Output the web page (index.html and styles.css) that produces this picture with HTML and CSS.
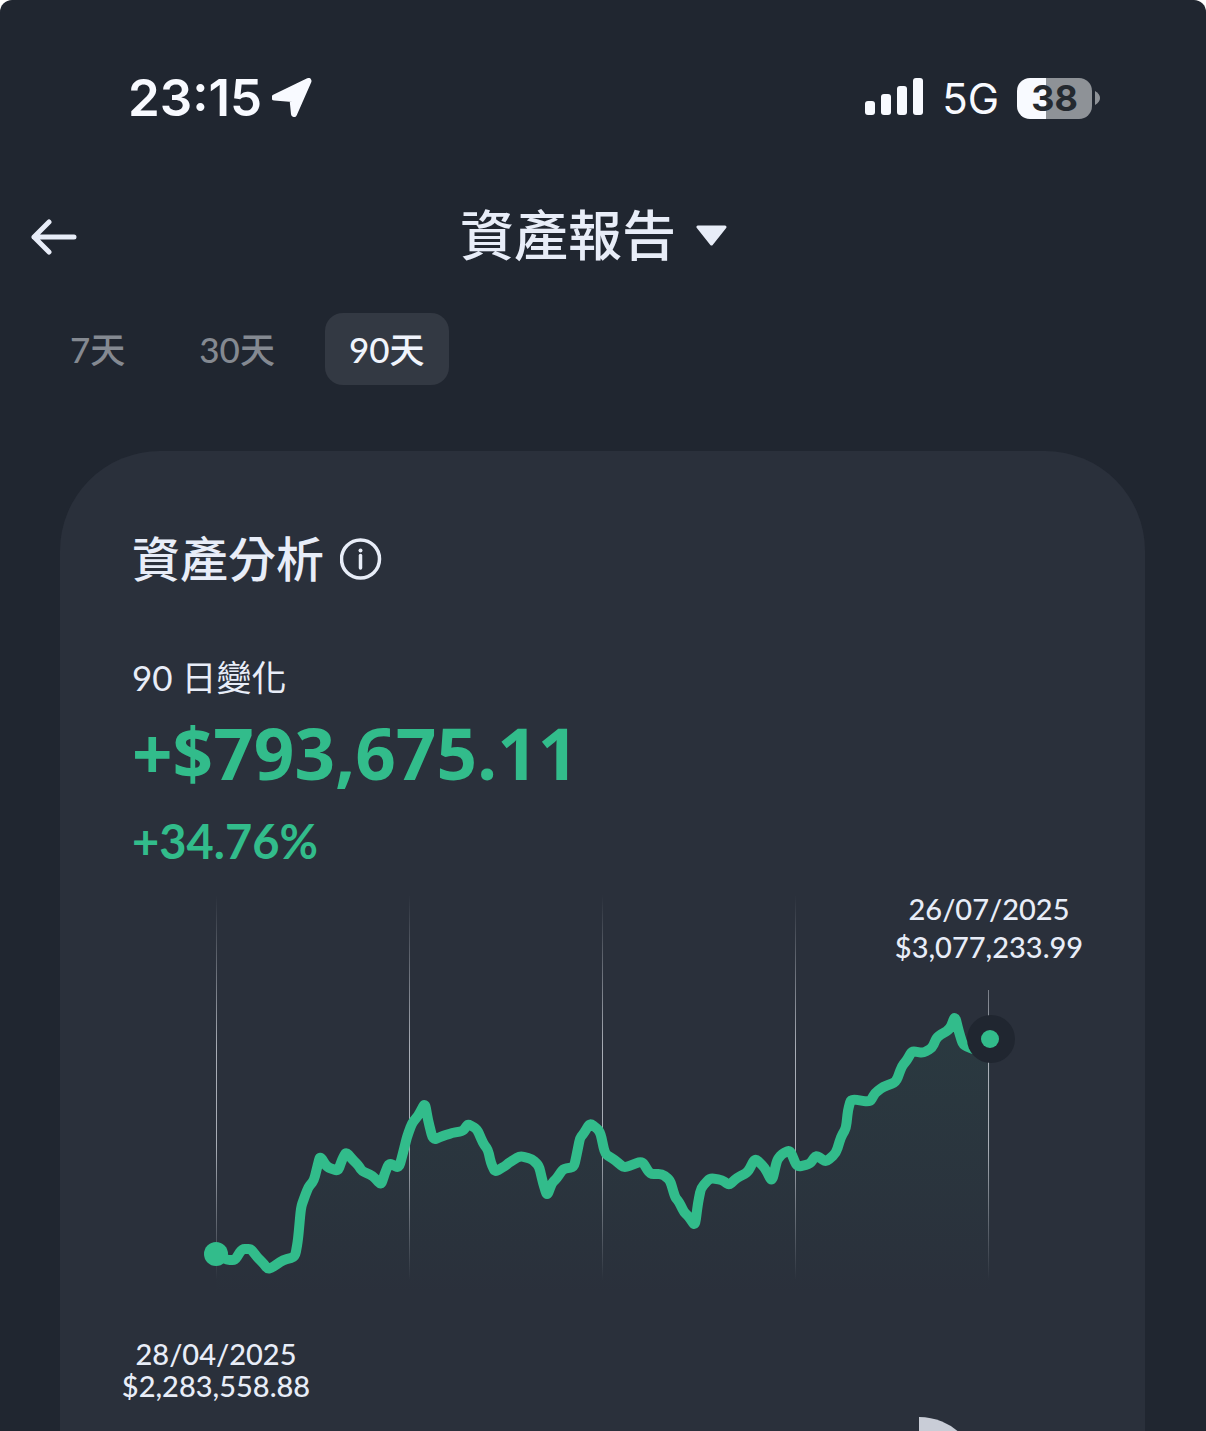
FILE: index.html
```html
<!DOCTYPE html>
<html lang="zh-Hant">
<head>
    <meta charset="UTF-8">
    <meta name="viewport" content="width=device-width, initial-scale=1.0">
    <title>資產報告</title>
    <link rel="stylesheet" href="styles.css">
</head>
<body>
<div class="screen">

    <!-- Status bar -->
    <div class="status-bar">
        <div class="status-group">
            <span class="clock">23:15</span>
            <svg class="location-icon" width="42" height="40" viewBox="0 0 42 40" aria-hidden="true">
                <path d="M2.500 19.500L36.500 3L22 36L20.500 21Z" fill="#f8faff" stroke="#f8faff" stroke-width="6" stroke-linejoin="round"/>
            </svg>
        </div>
        <div class="status-group status-right">
            <svg width="60" height="40" viewBox="0 0 60 40" fill="#f8faff" aria-hidden="true">
                <rect x="1" y="23" width="10" height="14" rx="3"/>
                <rect x="17" y="16" width="10" height="21" rx="3"/>
                <rect x="33" y="8" width="10" height="29" rx="3"/>
                <rect x="49" y="0" width="10" height="37" rx="3"/>
            </svg>
            <span class="network">5G</span>
            <div class="battery">
                <span class="battery-level">38</span>
                <svg width="5" height="14" viewBox="0 0 5 14" aria-hidden="true">
                    <path d="M0 0Q5 3 5 7Q5 11 0 14Z" fill="#8e9297"/>
                </svg>
            </div>
        </div>
    </div>

    <!-- Page header -->
    <header class="page-header">
        <button type="button" class="back-button" aria-label="返回">
            <svg width="48" height="38" viewBox="0 0 48 38" fill="none" stroke="#e8edf8" stroke-width="5" stroke-linecap="round" stroke-linejoin="round" aria-hidden="true">
                <path d="M44 20H4M19 5L4 20L19 35"/>
            </svg>
        </button>
        <h1 class="page-title">
            <button type="button" class="title-button">資產報告
                <svg width="32" height="22" viewBox="0 0 32 22" aria-hidden="true">
                    <path d="M2 2H29L15.500 19Z" fill="#e8edf8" stroke="#e8edf8" stroke-width="3" stroke-linejoin="round"/>
                </svg>
            </button>
        </h1>
    </header>

    <!-- Period tabs -->
    <nav class="tabs">
        <button type="button" class="tab">7天</button>
        <button type="button" class="tab">30天</button>
        <button type="button" class="tab active">90天</button>
    </nav>

    <main class="card">
        <section class="summary">
            <h2 class="card-title">資產分析
                <button type="button" class="info-button" aria-label="說明">
                    <svg width="42" height="42" viewBox="0 0 42 42" aria-hidden="true">
                        <circle cx="20.500" cy="21" r="19" fill="none" stroke="#e8edf8" stroke-width="3.500"/>
                        <circle cx="20.500" cy="12.500" r="2" fill="#e8edf8"/>
                        <path d="M20.500 17.500V30" stroke="#e8edf8" stroke-width="3.500" stroke-linecap="round"/>
                    </svg>
                </button>
            </h2>
            <p class="change-label">90 日變化</p>
            <p class="change-amount">+$793,675.11</p>
            <p class="change-percent">+34.76%</p>
        </section>

        <figure class="chart">
            <svg class="chart-svg" viewBox="60 890 1085 420" role="img" aria-label="90 日變化">
                <defs>
                    <linearGradient id="gridFade" gradientUnits="userSpaceOnUse" x1="0" y1="895" x2="0" y2="1280">
                        <stop offset="0" stop-color="#c8ccd4" stop-opacity="0"/>
                        <stop offset="0.4" stop-color="#c8ccd4" stop-opacity="0.8"/>
                        <stop offset="0.65" stop-color="#c8ccd4" stop-opacity="0.8"/>
                        <stop offset="1" stop-color="#c8ccd4" stop-opacity="0"/>
                    </linearGradient>
                    <linearGradient id="areaFade" gradientUnits="userSpaceOnUse" x1="0" y1="1020" x2="0" y2="1300">
                        <stop offset="0" stop-color="#2ebd8b" stop-opacity="0.07"/>
                        <stop offset="1" stop-color="#2ebd8b" stop-opacity="0"/>
                    </linearGradient>
                </defs>
                <path id="area" fill="url(#areaFade)"/>
                <g fill="url(#gridFade)">
                    <rect x="216" y="895" width="1" height="385"/>
                    <rect x="409" y="895" width="1" height="385"/>
                    <rect x="602" y="895" width="1" height="385"/>
                    <rect x="795" y="895" width="1" height="385"/>
                    <rect x="988" y="990" width="1" height="290"/>
                </g>
                <path id="line" fill="none" stroke="#32bc8b" stroke-width="10" stroke-linejoin="round" stroke-linecap="round"/>
                <circle cx="216" cy="1254" r="12" fill="#32bc8b"/>
                <circle cx="991" cy="1039" r="24" fill="#202630"/>
                <circle cx="990" cy="1039" r="9" fill="#32bc8b"/>
            </svg>
            <p class="point-label end-label">26/07/2025<br>$3,077,233.99</p>
            <p class="point-label start-label">28/04/2025<br>$2,283,558.88</p>
        </figure>

        <svg class="pie" width="120" height="120" viewBox="0 0 120 120" aria-hidden="true">
            <path d="M60 60V0A60 60 0 0 1 120 60Z" fill="#c9cdd7"/>
        </svg>
    </main>
</div>

<script src="chart.js"></script>
</body>
</html>
```
FILE: styles.css
```css
html {
    background-color: #ffffff;
}

body {
    margin: 0;
    font-family: Lato, "Noto Sans CJK TC", sans-serif;
    color: #e8edf8;
}

h1,
h2,
p,
figure {
    margin: 0;
}

button {
    padding: 0;
    border: none;
    background: none;
    color: inherit;
    font: inherit;
    cursor: pointer;
}

svg {
    display: block;
    flex: none;
}

.screen {
    height: 100vh;
    overflow: hidden;
    background-color: #202630;
    border-radius: 12px 12px 0 0;
}

/* Status bar */
.status-bar {
    display: flex;
    justify-content: space-between;
    align-items: center;
    height: 60px;
    padding: 68px 106px 0 128px;
    font-family: Inter, sans-serif;
    color: #f8faff;
}

.status-group {
    display: flex;
    align-items: center;
    gap: 10px;
}

.status-right {
    gap: 18px;
}

.clock {
    font-size: 51px;
    font-weight: 600;
    line-height: 60px;
}

.network {
    padding-top: 2px;
    font-size: 42px;
    font-weight: 400;
    line-height: 60px;
}

.battery {
    display: flex;
    align-items: center;
    gap: 3px;
}

.battery-level {
    width: 75px;
    border-radius: 13px;
    background: linear-gradient(to right, #f8faff 39%, #8e9297 39%);
    color: #24292f;
    font-size: 36px;
    font-weight: 700;
    line-height: 41px;
    text-align: center;
}

/* Header */
.page-header {
    display: grid;
    grid-template-columns: 48px 1fr 48px;
    align-items: center;
    padding: 68px 48px 0 30px;
}

.page-title {
    font-size: 54px;
    font-weight: 500;
    line-height: 80px;
    text-align: center;
}

.title-button {
    display: inline-flex;
    align-items: center;
    gap: 20px;
}

/* Tabs */
.tabs {
    display: flex;
    gap: 26px;
    padding: 37px 46px 0;
}

.tab {
    padding: 0 24px;
    border-radius: 18px;
    color: #848991;
    font-size: 35px;
    font-weight: 500;
    line-height: 72px;
}

.tab.active {
    background-color: #333943;
    color: #f0f4fc;
}

/* Card */
.card {
    margin: 66px 61px 0 60px;
    padding-top: 72px;
    border-radius: 100px 100px 0 0;
    background-color: #2a303b;
}

.summary {
    padding: 0 72px;
}

.card-title {
    display: flex;
    align-items: center;
    gap: 16px;
    font-size: 48px;
    font-weight: 500;
    line-height: 72px;
}

.change-label {
    margin-top: 58px;
    font-size: 35px;
    font-weight: 400;
    line-height: 48px;
}

.change-amount {
    color: #32bc8b;
    font-family: "Open Sans", sans-serif;
    font-size: 71px;
    font-weight: 700;
    line-height: 104px;
}

.change-percent {
    color: #32bc8b;
    font-size: 47px;
    font-weight: 700;
    line-height: 72px;
}

/* Chart */
.chart {
    position: relative;
    margin-top: 13px;
}

.chart-svg {
    width: 100%;
}

/* Both labels are centred on the first and the last point */
.point-label {
    width: 312px;
    font-size: 29px;
    font-weight: 500;
    line-height: 32px;
    text-align: center;
}

.end-label {
    position: absolute;
    top: 0;
    right: 0;
    line-height: 38px;
}

.start-label {
    margin-top: 28px;
}

.pie {
    margin: 15px 0 0 799px;
}
```
FILE: chart.js
```javascript
var points = [
    [216, 1254], [227, 1260], [235, 1260], [242, 1249], [251, 1249], [257, 1257], [262, 1262], [268, 1269],
    [273, 1267], [283, 1260], [295, 1257], [298, 1240], [301, 1207], [305, 1196], [308, 1188], [314, 1180],
    [317, 1168], [320, 1156], [327, 1167], [338, 1171], [342, 1160], [346, 1152], [353, 1160], [358, 1165],
    [362, 1171], [373, 1176], [381, 1185], [385, 1173], [389, 1163], [399, 1168], [403, 1153], [407, 1137],
    [412, 1123], [418, 1116], [425, 1103], [428, 1120], [433, 1140], [443, 1136], [452, 1133], [463, 1131],
    [468, 1124], [477, 1129], [483, 1143], [488, 1150], [491, 1163], [495, 1172], [505, 1166], [510, 1162],
    [520, 1156], [532, 1159], [539, 1166], [543, 1183], [547, 1196], [552, 1183], [557, 1178], [563, 1169],
    [574, 1167], [577, 1153], [580, 1138], [584, 1133], [590, 1123], [600, 1131], [605, 1154], [615, 1160],
    [624, 1168], [642, 1161], [650, 1174], [662, 1174], [670, 1180], [675, 1197], [679, 1202], [684, 1212],
    [689, 1217], [695, 1226], [698, 1203], [701, 1188], [710, 1178], [722, 1180], [729, 1185], [737, 1178],
    [748, 1172], [755, 1158], [765, 1168], [772, 1182], [777, 1160], [782, 1154], [790, 1150], [797, 1167],
    [810, 1164], [816, 1155], [826, 1162], [836, 1153], [841, 1137], [846, 1128], [848, 1110], [851, 1099],
    [870, 1102], [875, 1093], [883, 1087], [896, 1082], [902, 1066], [907, 1060], [912, 1051], [923, 1053],
    [932, 1048], [937, 1037], [950, 1029], [955, 1016], [959, 1032], [963, 1045], [975, 1050], [990, 1039]
];

// Line with slightly rounded corners
function buildPath(pts) {
    var d = "M" + pts[0].join(" ");
    for (var i = 1; i < pts.length - 1; i++) {
        var a = pts[i - 1];
        var p = pts[i];
        var b = pts[i + 1];
        var inX = p[0] + (a[0] - p[0]) * 0.3;
        var inY = p[1] + (a[1] - p[1]) * 0.3;
        var outX = p[0] + (b[0] - p[0]) * 0.3;
        var outY = p[1] + (b[1] - p[1]) * 0.3;
        d += "L" + inX + " " + inY + "Q" + p[0] + " " + p[1] + " " + outX + " " + outY;
    }
    return d + "L" + pts[pts.length - 1].join(" ");
}

var path = buildPath(points);
document.getElementById("line").setAttribute("d", path);
document.getElementById("area").setAttribute("d", path + "V1300H216Z");
```
